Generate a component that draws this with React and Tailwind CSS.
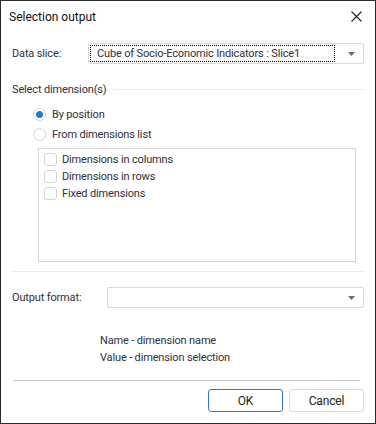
import React from 'react';

const Arrow = () => (
  <svg width="7" height="4" viewBox="0 0 7 4" className="shrink-0">
    <path d="M0 0h7L3.5 4z" fill="#6b6b6b" />
  </svg>
);

const Radio = ({ checked, label }) => (
  <div className="flex items-center h-[20px]">
    <span className="w-[13px] h-[13px] rounded-full border border-[#d4d4d4] bg-white flex items-center justify-center ml-[21px]">
      {checked && <span className="w-[7px] h-[7px] rounded-full bg-[#1b7fd1]" />}
    </span>
    <span className="ml-[6px]">{label}</span>
  </div>
);

const Check = ({ label }) => (
  <div className="flex items-center h-[17px]">
    <span className="w-[13px] h-[13px] rounded-[3px] border border-[#d4d4d4] bg-white ml-[5px]" />
    <span className="ml-[5px]">{label}</span>
  </div>
);

const App = () => {
  return (
    <div
      className="w-[376px] h-[424px] bg-white border border-[#2b2b2b] flex flex-col text-[11px] tracking-[-0.15px] text-[#2f2f3a] leading-none"
      style={{ fontFamily: 'Roboto, "Open Sans", sans-serif' }}
    >
      {/* Title bar */}
      <div className="h-[31px] flex items-center justify-between pl-[8px] pr-[13px]">
        <span className="text-[12px] tracking-normal text-[#111]">Selection output</span>
        <svg width="11" height="11" viewBox="0 0 11 11">
          <path d="M0.5 0.5l10 10M10.5 0.5l-10 10" stroke="#222" strokeWidth="1.1" />
        </svg>
      </div>

      <div className="flex flex-col px-[11px] flex-1">
        {/* Data slice */}
        <div className="flex items-center mt-[11px] h-[21px]">
          <span className="w-[76px]">Data slice:</span>
          <div className="flex-1 h-[21px] border border-[#d9d9d9] rounded-[2px] flex items-center pl-[1px] pr-[8px]">
            <div className="flex-1 h-[17px] border border-dotted border-black flex items-center pl-[6px]">
              Cube of Socio-Economic Indicators : Slice1
            </div>
            <div className="w-[20px] flex justify-end">
              <Arrow />
            </div>
          </div>
        </div>

        {/* Select dimensions */}
        <div className="flex items-center mt-[18px] h-[14px]">
          <span>Select dimension(s)</span>
          <div className="flex-1 h-px bg-[#ececec] ml-[6px]" />
        </div>

        <div className="mt-[8px] flex flex-col">
          <Radio checked label="By position" />
          <Radio label="From dimensions list" />
        </div>

        <div className="ml-[26px] mr-[8px] mt-[4px] h-[114px] border border-[#d4d4d4] pt-[2px]">
          <Check label="Dimensions in columns" />
          <Check label="Dimensions in rows" />
          <Check label="Fixed dimensions" />
        </div>

        <div className="h-px bg-[#ececec] mt-[9px]" />

        {/* Output format */}
        <div className="flex items-center mt-[15px] h-[21px]">
          <span className="w-[95px]">Output format:</span>
          <div className="flex-1 h-[21px] border border-[#d9d9d9] rounded-[2px] flex items-center justify-end pr-[8px]">
            <Arrow />
          </div>
        </div>

        <div className="ml-[88px] mt-[26px] flex flex-col gap-[5px]">
          <span className="h-[12px] flex items-center">Name - dimension name</span>
          <span className="h-[12px] flex items-center">Value - dimension selection</span>
        </div>

        <div className="h-px bg-[#c8c8c8] mt-[17px] ml-[1px] mr-[4px]" />

        <div className="flex justify-end gap-[6px] mt-[8px]">
          <button className="w-[75px] h-[23px] border border-[#2e7fc2] rounded-[3px] bg-white text-[12px] text-[#222]">
            OK
          </button>
          <button className="w-[75px] h-[23px] border border-[#dcdcdc] rounded-[3px] bg-white text-[12px] text-[#222]">
            Cancel
          </button>
        </div>
      </div>
    </div>
  );
};

export default App;
